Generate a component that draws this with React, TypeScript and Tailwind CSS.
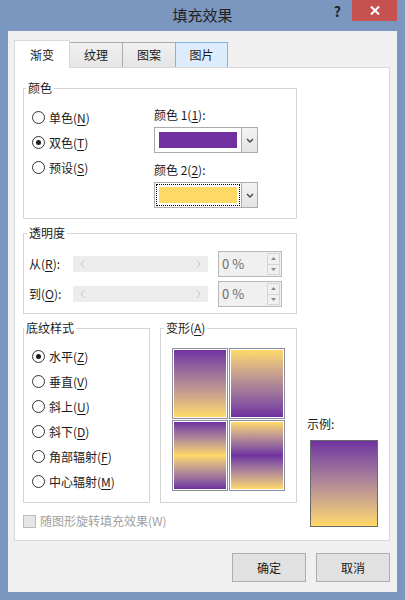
import React from 'react';

const Mn = ({ k }: { k: string }) => <span className="underline underline-offset-[2px]">{k}</span>;

const Radio = ({ checked, label, k }: { checked?: boolean; label: string; k: string }) => (
  <div className="flex h-[25px] items-center gap-[4px]">
    <span className="flex h-[13px] w-[13px] items-center justify-center rounded-full border border-[#333] bg-white">
      {checked && <span className="h-[5px] w-[5px] rounded-full bg-[#1a1a1a]" />}
    </span>
    <span>
      {label}(<Mn k={k} />)
    </span>
  </div>
);

const Group = ({ title, className, legend, children }: any) => (
  <div className={`border border-[#d5d5d5] ${className}`}>
    <div className={`-mt-[9px] w-fit bg-white px-[2px] leading-[16px] ${legend ?? 'ml-[2px]'}`}>{title}</div>
    {children}
  </div>
);

const Chevron = () => (
  <svg width="8" height="5" viewBox="0 0 8 5">
    <path d="M1 1 L4 4 L7 1" stroke="#444" strokeWidth="1.4" fill="none" />
  </svg>
);

const ColorDrop = ({ swatch, focused }: { swatch: string; focused?: boolean }) => (
  <div className="flex h-[26px] w-[104px] border border-[#acacac] bg-white">
    <div className="flex-1 p-[1px]">
      <div className={`h-full border p-[2px] ${focused ? 'border-dotted border-black' : 'border-transparent'}`}>
        <div className={`h-full ${swatch}`} />
      </div>
    </div>
    <div className="flex w-[16px] items-center justify-center border-l border-[#acacac] bg-linear-to-b from-[#f3f3f3] to-[#e4e4e4]">
      <Chevron />
    </div>
  </div>
);

const Slider = () => (
  <div className="flex h-[16px] w-[135px] items-center justify-between bg-[#ececec] px-[7px]">
    <svg width="5" height="8" viewBox="0 0 5 8">
      <path d="M4 0.5 L1 4 L4 7.5" stroke="#c4c4c4" fill="none" />
    </svg>
    <svg width="5" height="8" viewBox="0 0 5 8">
      <path d="M1 0.5 L4 4 L1 7.5" stroke="#c4c4c4" fill="none" />
    </svg>
  </div>
);

const Spin = () => (
  <div className="flex h-[26px] w-[64px] border border-[#b9b9b9] bg-[#f0f0f0]">
    <div className="flex-1 pl-[3px] text-[13px] leading-[24px] text-[#6d6d6d]">0 %</div>
    <div className="my-[1px] mr-[1px] flex w-[13px] flex-col">
      <div className="flex flex-1 items-center justify-center border border-[#d6d6d6]">
        <svg width="5" height="3" viewBox="0 0 5 3">
          <path d="M0 3 L2.5 0 L5 3 Z" fill="#8a8a8a" />
        </svg>
      </div>
      <div className="flex flex-1 items-center justify-center border border-t-0 border-[#d6d6d6]">
        <svg width="5" height="3" viewBox="0 0 5 3">
          <path d="M0 0 L2.5 3 L5 0 Z" fill="#8a8a8a" />
        </svg>
      </div>
    </div>
  </div>
);

const Tile = ({ grad }: { grad: string }) => (
  <div className="h-[71px] w-[56px] border border-[#8c8c9c] bg-white p-[1px]">
    <div className={`h-full w-full ${grad}`} />
  </div>
);

export default function App() {
  return (
    <div className="flex h-[600px] w-[405px] flex-col bg-[#7b97c0] font-['Noto_Sans_CJK_SC','Noto_Sans',sans-serif] text-[12px] leading-[16px] text-[#1a1a1a]">
      {/* title bar */}
      <div className="grid h-[31px] grid-cols-[1fr_auto_1fr]">
        <div />
        <div className="pt-[5px] text-[15px] leading-[20px] text-[#222]">填充效果</div>
        <div className="flex items-start justify-end pr-[8px]">
          <span className="mr-[11px] mt-[2px] text-[14px] font-bold leading-[18px] text-[#222]">?</span>
          <div className="flex h-[21px] w-[45px] items-center justify-center bg-[#c75050]">
            <svg width="10" height="9" viewBox="0 0 10 9">
              <path d="M1 0.5 L9 8.5 M9 0.5 L1 8.5" stroke="white" strokeWidth="2" />
            </svg>
          </div>
        </div>
      </div>

      {/* client */}
      <div className="mx-[8px] mb-[8px] flex flex-1 flex-col bg-[#f0f0f0] pl-[6px] pr-[7px]">
        <div className="flex items-end pt-[9px]">
          <div className="relative z-10 -mb-px flex h-[28px] w-[56px] items-center justify-center border border-b-0 border-[#d9d9d9] bg-white">
            渐变
          </div>
          <div className="-ml-px flex h-[25px] w-[54px] items-center justify-center border border-b-0 border-[#acacac] bg-linear-to-b from-[#f0f0f0] to-[#e5e5e5]">
            纹理
          </div>
          <div className="-ml-px flex h-[25px] w-[54px] items-center justify-center border border-b-0 border-[#acacac] bg-linear-to-b from-[#f0f0f0] to-[#e5e5e5]">
            图案
          </div>
          <div className="relative -ml-px flex h-[25px] w-[53px] items-center justify-center border border-b-0 border-[#7eb4ea] bg-[#dcecfc]">
            图片
          </div>
        </div>

        <div className="h-[474px] border border-[#d9d9d9] bg-white pl-[8px] pt-[20px]">
          <Group title="颜色" className="h-[131px] w-[274px]">
            <div className="flex">
              <div className="w-[130px] pl-[8px] pt-[9px]">
                <Radio label="单色" k="N" />
                <Radio label="双色" k="T" checked />
                <Radio label="预设" k="S" />
              </div>
              <div className="pt-[11px]">
                <div>
                  颜色 1(<Mn k="1" />):
                </div>
                <div className="mt-[4px]">
                  <ColorDrop swatch="bg-[#7030a0]" />
                </div>
                <div className="mt-[9px]">
                  颜色 2(<Mn k="2" />):
                </div>
                <div className="mt-[4px]">
                  <ColorDrop swatch="bg-[#ffd966]" focused />
                </div>
              </div>
            </div>
          </Group>

          <Group title="透明度" className="mt-[14px] h-[81px] w-[274px]" legend="ml-[3px]">
            <div className="mt-[10px] flex h-[26px] items-center">
              <div className="ml-[5px] w-[44px]">
                从(<Mn k="R" />):
              </div>
              <Slider />
              <div className="ml-[10px]">
                <Spin />
              </div>
            </div>
            <div className="mt-[4px] flex h-[26px] items-center">
              <div className="ml-[5px] w-[44px]">
                到(<Mn k="O" />):
              </div>
              <Slider />
              <div className="ml-[10px]">
                <Spin />
              </div>
            </div>
          </Group>

          <div className="mt-[14px] flex">
            <div className="w-[274px]">
              <div className="flex gap-[10px]">
                <Group title="底纹样式" className="h-[175px] w-[127px]" legend="ml-0">
                  <div className="mt-[8px] pl-[8px]">
                    <Radio label="水平" k="Z" checked />
                    <Radio label="垂直" k="V" />
                    <Radio label="斜上" k="U" />
                    <Radio label="斜下" k="D" />
                    <Radio label="角部辐射" k="F" />
                    <Radio label="中心辐射" k="M" />
                  </div>
                </Group>
                <Group
                  title={
                    <span>
                      变形(<Mn k="A" />)
                    </span>
                  }
                  className="h-[175px] w-[137px]"
                  legend="ml-[3px]"
                >
                  <div className="ml-[11px] mt-[12px] grid w-fit grid-cols-[56px_56px] gap-[1px]">
                    <Tile grad="bg-linear-to-b from-[#7030a0] to-[#ffd966]" />
                    <Tile grad="bg-linear-to-b from-[#ffd966] to-[#7030a0]" />
                    <Tile grad="bg-linear-to-b from-[#7030a0] via-[#ffd966] to-[#7030a0]" />
                    <Tile grad="bg-linear-to-b from-[#ffd966] via-[#7030a0] to-[#ffd966]" />
                  </div>
                </Group>
              </div>
              <div className="mt-[10px] flex items-center gap-[4px]">
                <span className="h-[13px] w-[13px] border border-[#bcbcbc] bg-[#e6e6e6]" />
                <span className="text-[#a0a0a0]">随图形旋转填充效果(W)</span>
              </div>
            </div>
            <div className="ml-[13px] pt-[88px]">
              <div className="-ml-[3px]">示例:</div>
              <div className="mt-[8px] h-[87px] w-[68px] border border-[#6a6a6a] bg-linear-to-b from-[#7030a0] to-[#ffd966]" />
            </div>
          </div>
        </div>

        <div className="mt-[12px] flex justify-end gap-[10px]">
          <div className="flex h-[29px] w-[74px] items-center justify-center border border-[#adadad] bg-[#e1e1e1]">确定</div>
          <div className="flex h-[29px] w-[74px] items-center justify-center border border-[#adadad] bg-[#e1e1e1]">取消</div>
        </div>
      </div>
    </div>
  );
}
